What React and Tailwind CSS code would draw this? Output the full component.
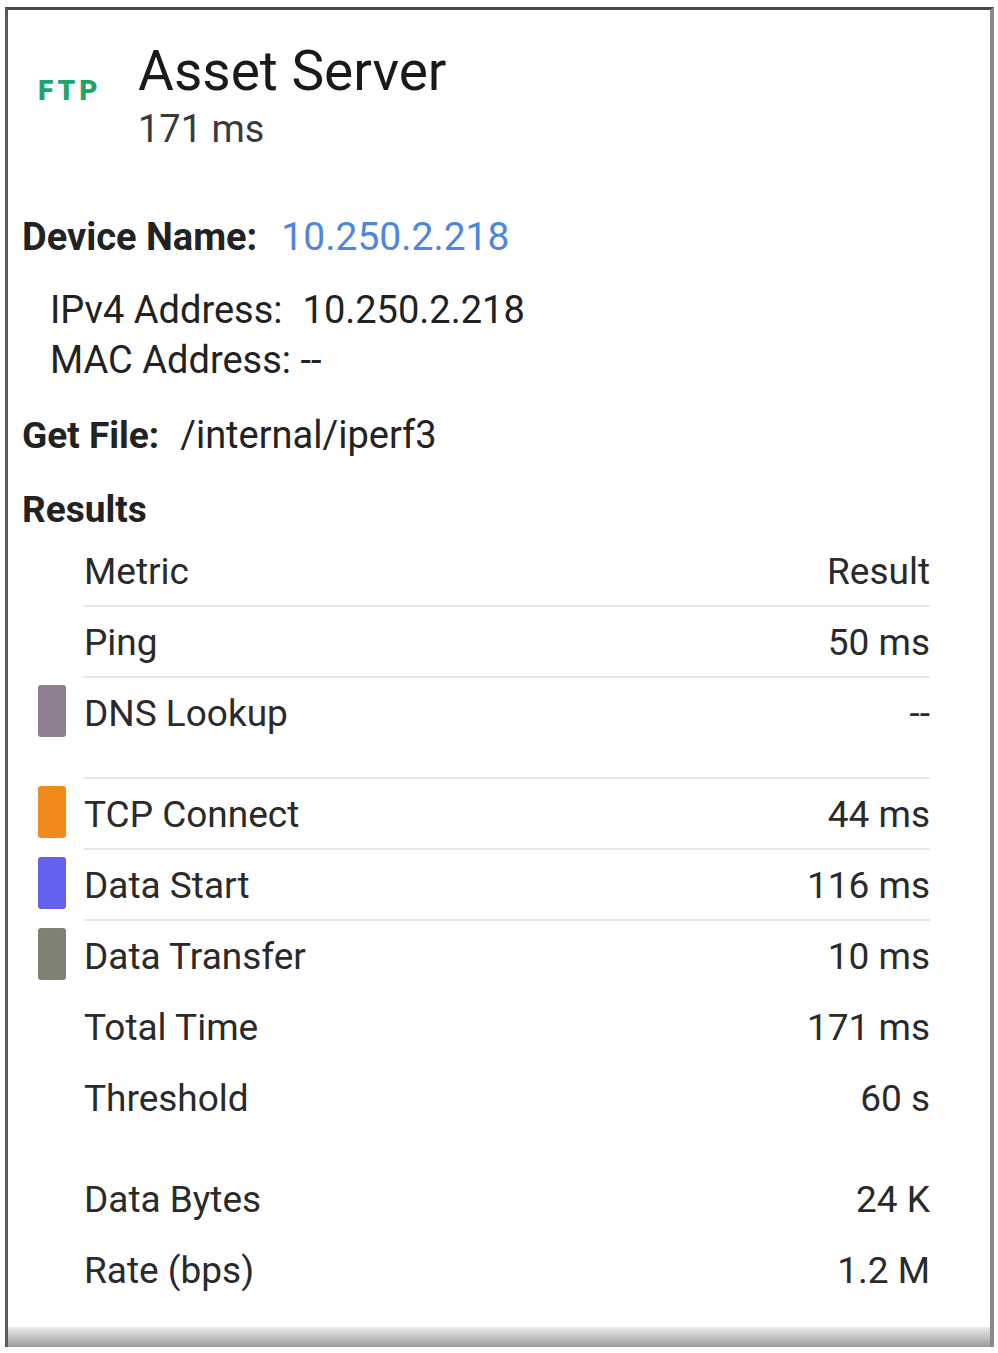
const rows = [
  { label: "Ping", value: "50 ms", line: true },
  { label: "DNS Lookup", value: "--", bar: "bg-[#8e7e90]", tall: true, line: true },
  { label: "TCP Connect", value: "44 ms", bar: "bg-[#f2891c]", line: true },
  { label: "Data Start", value: "116 ms", bar: "bg-[#6462ee]", line: true },
  { label: "Data Transfer", value: "10 ms", bar: "bg-[#7e8173]" },
  { label: "Total Time", value: "171 ms" },
  { label: "Threshold", value: "60 s", tall: true },
  { label: "Data Bytes", value: "24 K" },
  { label: "Rate (bps)", value: "1.2 M" },
];

function ResultRow({ label, value, bar, tall, line }) {
  return (
    <div className={`flex ${tall ? "h-[101px]" : "h-[71px]"}`}>
      <div className="w-[62px] pl-[16px] pt-[7px]">
        {bar ? <div className={`h-[52px] w-[28px] rounded-[3px] ${bar}`} /> : null}
      </div>
      <div
        className={`flex-1 ${line ? "border-b-2 border-[#e6e6e6]" : ""} ${
          tall && line ? "pb-[5px]" : ""
        }`}
      >
        <div className="flex h-[71px] items-center justify-between">
          <span>{label}</span>
          <span>{value}</span>
        </div>
      </div>
    </div>
  );
}

export default function App() {
  return (
    <div className="h-[1353px] w-[998px] overflow-hidden bg-white pl-[5px] pt-[7px] font-['Roboto',sans-serif] text-[#222]">
      <div className="flex h-[1340px] w-[989px] flex-col border-l-[3px] border-r-[4px] border-t-[3px] border-l-[#5a5a5a] border-r-[#8a8a8a] border-t-[#4a4a4a]">
        <div className="flex pl-[30px] pt-[34px]">
          <div className="w-[100px] pt-[33px] text-[28px] font-black leading-none tracking-[4px] text-[#1fa56c]">
            FTP
          </div>
          <div>
            <div className="text-[55px] leading-none text-[#1a1a1a]">Asset Server</div>
            <div className="mt-[11px] text-[38px] leading-none text-[#3a3a3a]">171 ms</div>
          </div>
        </div>

        <div className="pl-[14px] text-[38px] leading-none">
          <div className="mt-[70px]">
            <span className="font-bold">Device Name:</span>
            <span className="ml-[24px] text-[39px] text-[#4f86dc]">10.250.2.218</span>
          </div>
          <div className="ml-[28px] mt-[34px]">
            IPv4 Address:<span className="ml-[20px]">10.250.2.218</span>
          </div>
          <div className="ml-[28px] mt-[12px]">MAC Address: --</div>
          <div className="mt-[37px]">
            <span className="text-[37px] font-bold">Get File:</span>
            <span className="ml-[21px]">/internal/iperf3</span>
          </div>
          <div className="mt-[37px] text-[37px] font-bold">Results</div>

          <div className="mt-[8px] pr-[60px] text-[37px] text-[#2a2a2a]">
            <ResultRow label="Metric" value="Result" line />
            {rows.map((row) => (
              <ResultRow key={row.label} {...row} />
            ))}
          </div>
        </div>

        <div className="mt-auto h-[20px] bg-gradient-to-b from-[#ececec] to-[#9c9c9c]" />
      </div>
    </div>
  );
}
